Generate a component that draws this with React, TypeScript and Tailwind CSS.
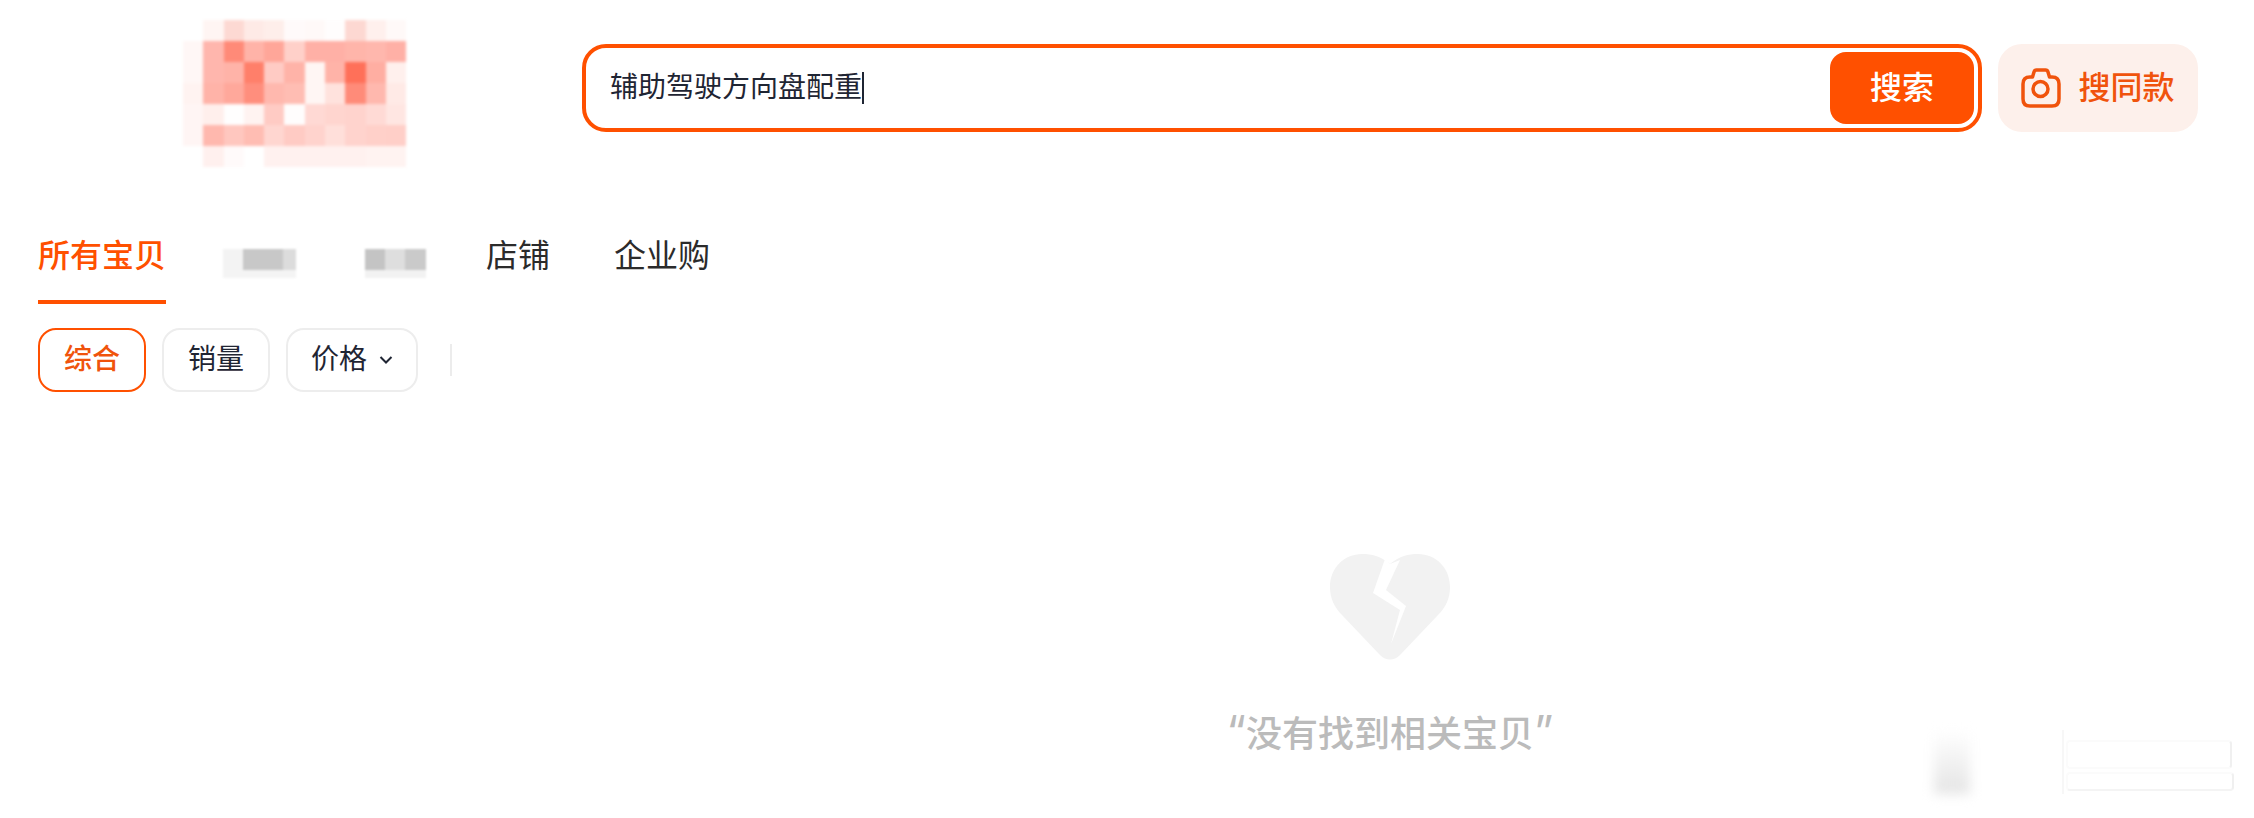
import React from "react";

const mosaic = [
  ["#ffffff", "#fff5f3", "#fdd9d3", "#feeae6", "#feeeea", "#fffafa", "#fff9f8", "#fffdfd", "#fdd8d2", "#fff0ed", "#fff9f8"],
  ["#fff7f6", "#ffb6ad", "#ff8a78", "#ffb3a8", "#ffa699", "#ffd0c9", "#ffb0a6", "#ffb0a6", "#ffb5aa", "#ffb7ad", "#ffb0a6"],
  ["#fff7f6", "#ffb6ad", "#ffb3a8", "#ff7f6a", "#ffcbc4", "#ffb3a8", "#fff6f4", "#ffb3a8", "#ff7059", "#ffaea2", "#fff0ed"],
  ["#fff3f1", "#ffb3a8", "#ffa89b", "#ff8e7d", "#ffb8ae", "#ffbdb3", "#fff6f4", "#ffe2dd", "#ff8b79", "#ffb8ae", "#ffeae6"],
  ["#fff5f4", "#ffefec", "#fffefe", "#fff3f1", "#ffcbc4", "#fffdfd", "#ffd9d4", "#ffd5cf", "#ffd3cd", "#ffdad5", "#ffe6e2"],
  ["#fff5f4", "#ffb8ae", "#ffc7bf", "#ffbdb3", "#ffd6d0", "#ffcbc4", "#ffd3cd", "#ffdfda", "#ffd3cd", "#ffd0c9", "#ffcfc8"],
  ["#ffffff", "#fff0ee", "#fffafa", "#ffffff", "#fff1ef", "#fff1ef", "#fff1ef", "#fff1ef", "#fff1ef", "#fff3f1", "#fff3f1"],
];

const Logo = () => (
  <div className="ml-[183px] mt-[10px] grid grid-cols-[repeat(11,20.3px)] grid-rows-[repeat(7,21px)] blur-[1.5px] shrink-0">
    {mosaic.flat().map((c, i) => (
      <div key={i} style={{ backgroundColor: c }} />
    ))}
  </div>
);

const CameraIcon = () => (
  <svg width="40" height="40" viewBox="0 0 40 40" fill="none" stroke="#f0530c" strokeWidth="3.5">
    <path
      d="M11.500 9 L13 4 C13.400 2.700 14.200 2 15.500 2 H24.500 C25.800 2 26.600 2.700 27 4 L28.500 9 H31 C35.500 9 38 11.500 38 16 V31 C38 35.500 35.500 38 31 38 H9 C4.500 38 2 35.500 2 31 V16 C2 11.500 4.500 9 9 9 Z"
      strokeLinejoin="round"
    />
    <circle cx="19.500" cy="21" r="7.500" />
  </svg>
);

const SearchBar = () => (
  <div className="ml-[175.7px] flex items-center gap-[16px]">
    <div className="w-[1400px] h-[88px] border-4 border-[#ff5000] rounded-[24px] flex items-center justify-between pl-[24px] pr-[4px] bg-white">
      <div className="flex items-center text-[28px] text-[#1f2533]">
        <span>辅助驾驶方向盘配重</span>
        <span className="w-[2px] h-[32px] bg-[#1f2533]" />
      </div>
      <button className="w-[144px] h-[72px] rounded-[16px] bg-[#ff5000] text-white text-[32px] font-medium">
        搜索
      </button>
    </div>
    <button className="w-[200px] h-[88px] rounded-[24px] bg-[#fdf0eb] flex items-center justify-center gap-[17px] text-[#f0530c] text-[32px] font-medium">
      <CameraIcon />
      <span>搜同款</span>
    </button>
  </div>
);

// pixelated stand-ins for the two blurred-out tab names
const BlurTab = ({ cells, bottom }: { cells: string[]; bottom: string }) => (
  <div className="mt-[19px] blur-[0.8px]">
    <div className="h-[21px] flex">
      {cells.map((c, i) => (
        <div key={i} className="w-[20px] last:w-auto last:flex-1" style={{ backgroundColor: c }} />
      ))}
    </div>
    <div className="h-[8px]" style={{ backgroundColor: bottom }} />
  </div>
);

const Tabs = () => (
  <div className="mt-[54px] ml-[38px] h-[74px] flex text-[32px] leading-[52px] text-[#2b2b2b]">
    <div className="w-[128px] h-[74px] text-[#ff5000] font-medium border-b-4 border-[#ff5000]">所有宝贝</div>
    <div className="ml-[57px] w-[73px]">
      <BlurTab cells={["#f3f3f3", "#c8c8c8", "#c8c8c8", "#dcdcdc"]} bottom="#f4f4f4" />
    </div>
    <div className="ml-[69px] w-[61px]">
      <BlurTab cells={["#c4c4c4", "#dedede", "#cacaca"]} bottom="#f2f2f2" />
    </div>
    <div className="ml-[60px]">店铺</div>
    <div className="ml-[64px]">企业购</div>
  </div>
);

const Filters = () => (
  <div className="mt-[24px] ml-[38px] flex items-center gap-[16px] text-[28px] text-[#1f2533]">
    <button className="w-[108px] h-[64px] rounded-[18px] border-2 border-[#ff5000] text-[#f0530c] font-medium">综合</button>
    <button className="w-[108px] h-[64px] rounded-[18px] border-2 border-[#ededed]">销量</button>
    <button className="w-[132px] h-[64px] rounded-[18px] border-2 border-[#ededed] flex items-center justify-center gap-[12px]">
      <span>价格</span>
      <svg width="14" height="10" viewBox="0 0 14 10" fill="none" stroke="#1f2533" strokeWidth="2">
        <path d="M1.500 2 L7 7.500 L12.500 2" />
      </svg>
    </button>
    <div className="ml-[16px] w-[2px] h-[32px] bg-[#ececec]" />
  </div>
);

const BrokenHeart = () => (
  <svg width="120" height="106" viewBox="0 0 120 106">
    <path
      d="M60 10 C50 2 42 0 32 0 C14 0 0 14 0 33 C0 44 4 53 12 61 L50 101 C56 107 64 107 70 101 L108 61 C116 53 120 44 120 33 C120 14 106 0 88 0 C78 0 70 2 60 10 Z"
      fill="#f2f2f2"
    />
    <path d="M55 5 L43 39 L70 56 L61 90 L76 52 L56 36 L70 6 L60 10 Z" fill="#ffffff" />
  </svg>
);

const Empty = () => (
  <div className="mt-[162px] ml-[1330px] w-[120px] flex flex-col items-center">
    <BrokenHeart />
    <div className="mt-[46px] flex items-baseline text-[36px] leading-[50px] font-medium text-[#bbbbbb] whitespace-nowrap">
      <span className="font-['Inter',sans-serif] text-[44px] font-normal leading-[50px]">“</span>
      <span>没有找到相关宝贝</span>
      <span className="font-['Inter',sans-serif] text-[44px] font-normal leading-[50px]">”</span>
    </div>
  </div>
);

const Watermark = () => (
  <div className="absolute left-[1930px] top-[730px] w-[310px] h-[70px] pointer-events-none">
    <div className="absolute left-[4px] top-0 w-[36px] h-[64px] blur-[6px] bg-gradient-to-b from-[#ffffff] to-[#e4e4e4]" />
    <div className="absolute left-[132px] top-0 w-[2px] h-[64px] bg-[#f7f7f7]" />
    <div className="absolute left-[136px] top-[10px] w-[166px] h-[29px] rounded-[4px] border-2 border-[#fbfbfb] border-r-[#f0f0f0]" />
    <div className="absolute left-[136px] top-[42px] w-[168px] h-[19px] rounded-[4px] border-2 border-[#fbfbfb] border-r-[#f0f0f0] border-b-[#f4f4f4]" />
  </div>
);

export default function App() {
  return (
    <div className="relative w-[2254px] h-[818px] overflow-hidden bg-white font-['Liberation_Sans','Noto_Sans_CJK_SC',sans-serif]">
      <div className="h-[176px] flex items-center">
        <Logo />
        <SearchBar />
      </div>
      <Tabs />
      <Filters />
      <Empty />
      <Watermark />
    </div>
  );
}
